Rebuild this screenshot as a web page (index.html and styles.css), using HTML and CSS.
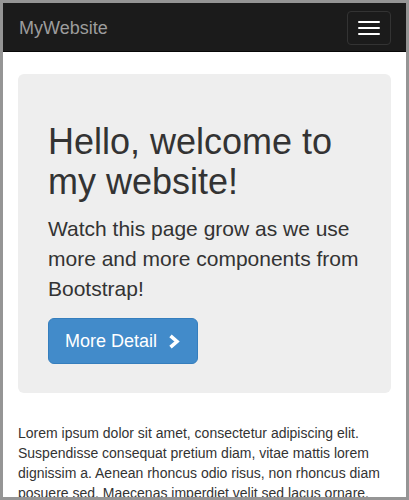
FILE: index.html
```html
<!DOCTYPE html>
<html>
<head>
<meta charset="utf-8">
<link rel="stylesheet" href="styles.css">
</head>
<body>
<div class="frame">
  <nav class="navbar">
    <a class="brand">MyWebsite</a>
    <button class="toggle" type="button">
      <span class="bar"></span>
      <span class="bar"></span>
      <span class="bar"></span>
    </button>
  </nav>
  <div class="container">
    <div class="jumbotron">
      <h1 class="title">Hello, welcome to my website!</h1>
      <p class="lead">Watch this page grow as we use more and more components from Bootstrap!</p>
      <a class="btn">More Detail<svg class="chev" width="12" height="15" viewBox="0 0 12 15"><path d="M2.5 1.8 L9 7.5 L2.5 13.2" fill="none" stroke="#fff" stroke-width="3.6" stroke-linejoin="miter"/></svg></a>
    </div>
    <p class="body-text">Lorem ipsum dolor sit amet, consectetur adipiscing elit. Suspendisse consequat pretium diam, vitae mattis lorem dignissim a. Aenean rhoncus odio risus, non rhoncus diam posuere sed. Maecenas imperdiet velit sed lacus ornare. Vestibulum faucibus nunc vel viverra tempor. Nulla facilisi.</p>
  </div>
</div>
</body>
</html>
```
FILE: styles.css
```css
html, body {
  margin: 0;
  padding: 0;
  overflow: hidden;
}
body {
  font-family: "Liberation Sans", Arial, sans-serif;
  color: #333;
  font-size: 14px;
  line-height: 20px;
}
.frame {
  box-sizing: border-box;
  width: 409px;
  height: 500px;
  border: 3px solid #959595;
  overflow: hidden;
  background: #fff;
}
.navbar {
  height: 48px;
  background: #1b1b1b;
  border-bottom: 1px solid #080808;
  display: flex;
  align-items: flex-start;
  justify-content: space-between;
  padding: 0 15px;
}
.brand {
  font-size: 18px;
  line-height: 20px;
  color: #9d9d9d;
  padding-top: 15px;
  padding-left: 1px;
}
.toggle {
  margin-top: 8px;
  width: 44px;
  height: 34px;
  box-sizing: border-box;
  background: transparent;
  border: 1px solid #333;
  border-radius: 4px;
  padding: 9px 10px;
  display: flex;
  flex-direction: column;
  gap: 4px;
}
.bar {
  display: block;
  width: 22px;
  height: 2px;
  background: #fff;
  border-radius: 1px;
}
.container {
  padding: 22px 15px 0;
}
.jumbotron {
  background: #eee;
  border-radius: 6px;
  padding: 30px 30px 29px;
  margin-bottom: 30px;
}
.title {
  font-size: 36px;
  line-height: 39.6px;
  font-weight: 500;
  margin: 18px 0 13px;
}
.lead {
  font-size: 21px;
  line-height: 30px;
  margin: 0 0 14px;
}
.btn {
  display: inline-flex;
  align-items: center;
  background: #428bca;
  border: 1px solid #357ebd;
  border-radius: 6px;
  color: #fff;
  font-size: 18px;
  line-height: 24px;
  padding: 10px 17px 10px 16px;
}
.chev {
  margin-left: 11px;
  display: block;
}
.body-text {
  margin: 0;
  padding-left: 0;
}
```
